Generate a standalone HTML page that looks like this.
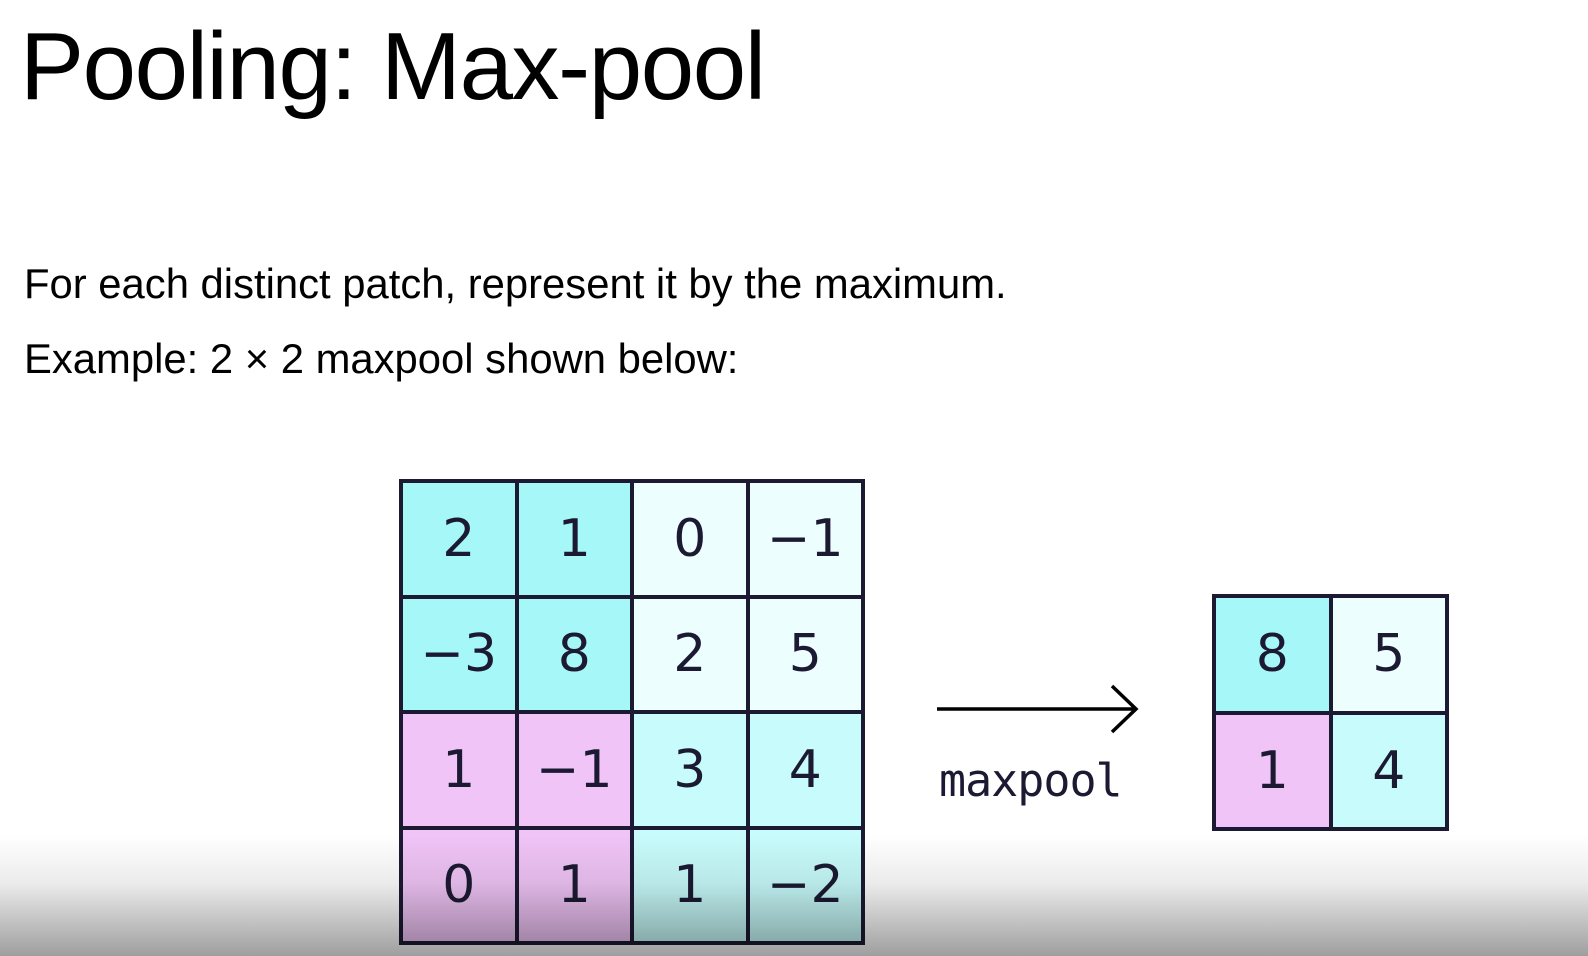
<!DOCTYPE html>
<html><head><style>
html,body{margin:0;padding:0}
body{width:1588px;height:956px;background:#fff;position:relative;overflow:hidden;font-family:"Liberation Sans",sans-serif;color:#000}
.t{position:absolute;left:20px;top:12px;font-size:96px;line-height:110px;letter-spacing:-1.4px}
.p{position:absolute;left:24px;font-size:41.8px;line-height:48px}
.g{position:absolute;border:4px solid #1c1a33;background:#1c1a33;display:grid;gap:4px}
.g div{display:flex;align-items:center;justify-content:center;font-family:"DejaVu Sans","Liberation Sans",sans-serif;font-size:52px;color:#1c1a33}
.c{background:#a6f7f7}.w{background:#edfefe}.m{background:#f0c4f6}.l{background:#c8fbfb}
.ov{position:absolute;left:0;right:0;top:835px;bottom:0;background:linear-gradient(to bottom,rgba(0,0,0,0),rgba(0,0,0,0.08) 40%,rgba(0,0,0,0.38))}
</style></head><body>
<div class="t">Pooling: Max-pool</div>
<div class="p" style="top:260px">For each distinct patch, represent it by the maximum.</div>
<div class="p" style="top:335px">Example: 2 × 2 maxpool shown below:</div>
<div class="g" style="left:399px;top:479px;width:458px;height:458px;grid-template-columns:repeat(4,1fr);grid-template-rows:repeat(4,1fr)">
<div class="c">2</div><div class="c">1</div><div class="w">0</div><div class="w">−1</div>
<div class="c">−3</div><div class="c">8</div><div class="w">2</div><div class="w">5</div>
<div class="m">1</div><div class="m">−1</div><div class="l">3</div><div class="l">4</div>
<div class="m">0</div><div class="m">1</div><div class="l">1</div><div class="l">−2</div>
</div>
<svg style="position:absolute;left:930px;top:678px" width="220" height="70"><path d="M7 31H205M182 8L206 31L182 54" stroke="#000" stroke-width="3.5" fill="none"/></svg>
<div style="position:absolute;left:939px;top:754px;font-family:'DejaVu Sans Mono','Liberation Mono',monospace;font-size:45px;color:#1c1a33;letter-spacing:-1px">maxpool</div>
<div class="g" style="left:1212px;top:594px;width:229px;height:229px;grid-template-columns:repeat(2,1fr);grid-template-rows:repeat(2,1fr)">
<div class="c">8</div><div class="w">5</div><div class="m">1</div><div class="l">4</div>
</div>
<div class="ov"></div>
</body></html>
